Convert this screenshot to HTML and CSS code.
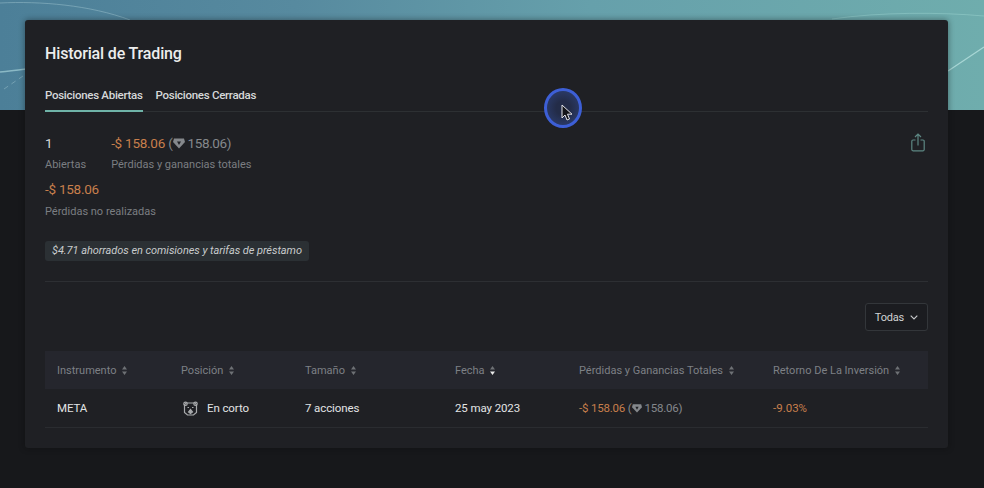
FILE: index.html
```html
<!DOCTYPE html>
<html lang="es">
<head>
<meta charset="utf-8">
<title>Historial de Trading</title>
<link rel="stylesheet" href="styles.css">
</head>
<body>
<svg class="banner-lines" width="984" height="110" viewBox="0 0 984 110" fill="none">
  <path d="M0 3C40 1 90 5 130 20" stroke="#8fb8c4" stroke-opacity=".6"/>
  <path d="M0 72C10 71 18 70 26 69" stroke="#a5d2d8" stroke-opacity=".7" stroke-width="1.5"/>
  <path d="M4 89L23 76" stroke="#a5c8d0" stroke-opacity=".45" stroke-dasharray="5 4"/>
  <path d="M832 19C880 12 940 12 984 16" stroke="#a5dcd8" stroke-opacity=".4"/>
  <path d="M948 71L984 47" stroke="#c0e8e6" stroke-opacity=".7" stroke-width="1.2"/>
</svg>
<main class="card">
  <h1 class="title">Historial de Trading</h1>
  <nav class="tabs">
    <a class="tab tab-active">Posiciones Abiertas</a>
    <a class="tab">Posiciones Cerradas</a>
  </nav>
  <section class="summary">
    <div class="summary-stats">
      <div class="stat-row">
        <div class="stat stat-open">
          <div class="stat-value">1</div>
          <div class="stat-label">Abiertas</div>
        </div>
        <div class="stat">
          <div class="stat-value"><span class="loss">-$ 158.06</span> <span class="muted muted-lg">(<svg class="gem gem-lg" viewBox="0 0 12 12"><path d="M1 1.500h10l1 3.500-6 6.500L0 5z" fill="currentColor"/><path d="M4 4.500h4L6 8z" fill="#1f2024"/></svg>158.06)</span></div>
          <div class="stat-label">Pérdidas y ganancias totales</div>
        </div>
      </div>
      <div class="stat stat-unrealized">
        <div class="stat-value loss">-$ 158.06</div>
        <div class="stat-label">Pérdidas no realizadas</div>
      </div>
    </div>
    <button class="share" aria-label="Compartir">
      <svg width="14" height="19" viewBox="0 0 14 19" fill="none" stroke="#5d8783" stroke-width="1.200">
        <path d="M4.500 7H2a1.200 1.200 0 0 0-1.200 1.200v8.400A1.200 1.200 0 0 0 2 17.800h10a1.200 1.200 0 0 0 1.200-1.200V8.200A1.200 1.200 0 0 0 12 7H9.500"/>
        <path d="M7 12.500V1M4 4l3-3 3 3"/>
      </svg>
    </button>
  </section>
  <div class="saved">$4.71 ahorrados en comisiones y tarifas de préstamo</div>
  <hr class="divider">
  <div class="filter-row">
    <button class="filter">Todas
      <svg width="8" height="5" viewBox="0 0 8 5" fill="none" stroke="#c8cacc" stroke-width="1.100"><path d="M.7.700 4 4 7.300.7"/></svg>
    </button>
  </div>
  <div class="table">
    <div class="row head">
      <div class="cell">Instrumento <svg class="sort" viewBox="0 0 5 9"><path d="M2.500 0 5 3.500H0zM2.500 9 0 5.500h5z"/></svg></div>
      <div class="cell">Posición <svg class="sort" viewBox="0 0 5 9"><path d="M2.500 0 5 3.500H0zM2.500 9 0 5.500h5z"/></svg></div>
      <div class="cell">Tamaño <svg class="sort" viewBox="0 0 5 9"><path d="M2.500 0 5 3.500H0zM2.500 9 0 5.500h5z"/></svg></div>
      <div class="cell">Fecha <svg class="sort" viewBox="0 0 5 9"><path d="M2.500 0 5 3.500H0z"/><path class="sort-on" d="M2.500 9 0 5.500h5z"/></svg></div>
      <div class="cell">Pérdidas y Ganancias Totales <svg class="sort" viewBox="0 0 5 9"><path d="M2.500 0 5 3.500H0zM2.500 9 0 5.500h5z"/></svg></div>
      <div class="cell">Retorno De La Inversión <svg class="sort" viewBox="0 0 5 9"><path d="M2.500 0 5 3.500H0zM2.500 9 0 5.500h5z"/></svg></div>
    </div>
    <div class="row body">
      <div class="cell strong">META</div>
      <div class="cell strong position">
        <svg width="15" height="15" viewBox="0 0 15 15" fill="none" stroke="#a8aaac" stroke-width="1.200">
          <circle cx="2.500" cy="2.800" r="1.700"/><circle cx="12.500" cy="2.800" r="1.700"/>
          <path d="M3 2h9l1.500 2v7.500L10.500 14h-6l-3-2.500V4z"/>
          <path d="M4.500 6.500h1.500M9 6.500h1.500M5.500 11l2-2.500 2 2.500-2 1.500z" fill="#a8aaac"/>
        </svg>
        En corto
      </div>
      <div class="cell strong">7 acciones</div>
      <div class="cell strong">25 may 2023</div>
      <div class="cell values"><span class="loss">-$ 158.06</span> <span class="muted">(<svg class="gem" viewBox="0 0 12 12"><path d="M1 1.500h10l1 3.500-6 6.500L0 5z" fill="currentColor"/><path d="M4 4.500h4L6 8z" fill="#1f2024"/></svg>158.06)</span></div>
      <div class="cell loss">-9.03%</div>
    </div>
  </div>
</main>
<div class="cursor">
  <svg width="12" height="17" viewBox="0 0 12 17"><path d="M1 1v13l3-3 2 5 2.500-1-2-4.800H11z" fill="#15161a" stroke="#e4e4e8" stroke-width="1"/></svg>
</div>
</body>
</html>
```

FILE: styles.css
```css
* { box-sizing: border-box; }

html, body { height: 100%; }

body {
  margin: 0;
  height: 488px;
  overflow: hidden;
  padding: 20px 36px 0 25px;
  position: relative;
  font-family: Roboto, "Liberation Sans", sans-serif;
  font-size: 12px;
  color: #d8dadb;
  background:
    linear-gradient(90deg, #4c7f98 0%, #578a9f 30%, #66a0ab 60%, #6fadad 100%) top left / 100% 110px no-repeat,
    #17181b;
}

.banner-lines {
  position: absolute;
  top: 0;
  left: 0;
}

.card {
  position: relative;
  height: 428px;
  padding: 0 20px;
  background: #1f2024;
  border-radius: 3px;
  box-shadow: 0 0 6px rgba(10, 10, 12, .45);
}

.title {
  margin: 0;
  padding-top: 24px;
  font-size: 16px;
  line-height: 20px;
  font-weight: 500;
  letter-spacing: -.15px;
  color: #eceded;
}

.tabs {
  display: flex;
  gap: 13px;
  margin-top: 22px;
  border-bottom: 1px solid #2d3033;
  height: 26px;
}

.tab {
  height: 26px;
  padding-top: 2px;
  font-size: 11.500px;
  line-height: 14px;
  font-weight: 500;
  letter-spacing: -.28px;
  color: #d6d8d9;
}

.tab-active {
  border-bottom: 2px solid #6fb3a8;
}

.summary {
  display: flex;
  justify-content: space-between;
  align-items: flex-start;
  margin-top: 22px;
}

.stat-row {
  display: flex;
  gap: 25px;
}

.stat { margin-bottom: 8px; }

.stat-value {
  font-size: 13.500px;
  line-height: 18px;
  letter-spacing: -.25px;
  color: #d8dadb;
}

.stat-label {
  margin-top: 6px;
  font-size: 11px;
  line-height: 14px;
  color: #7b7e82;
}

.stat-unrealized .stat-label { margin-top: 7px; }

.loss { color: #c87f4c; }
.muted { color: #85888c; }
.muted-lg { letter-spacing: -.35px; }

.gem {
  width: 10px;
  height: 10px;
  margin: 0 2px 0 1px;
  vertical-align: -1px;
}

.gem-lg {
  width: 12px;
  height: 12px;
}

.values {
  letter-spacing: -.2px;
}

.share {
  margin: -1px 3px 0 0;
  padding: 0;
  border: 0;
  background: none;
  line-height: 0;
}

.saved {
  display: inline-block;
  height: 20px;
  margin-top: 14px;
  padding: 0 7px;
  border-radius: 3px;
  background: #2b3034;
  font-size: 11px;
  line-height: 20px;
  font-style: italic;
  letter-spacing: -.06px;
  color: #c8cbcc;
}

.divider {
  margin: 20px 0 0;
  border: 0;
  border-top: 1px solid #2d2f33;
}

.filter-row {
  display: flex;
  justify-content: flex-end;
  margin-top: 21px;
}

.filter {
  display: flex;
  align-items: center;
  gap: 6px;
  height: 28px;
  padding: 0 9px;
  border: 1px solid #33363a;
  border-radius: 3px;
  background: #1b1c20;
  font: 400 11px Roboto, "Liberation Sans", sans-serif;
  letter-spacing: -.2px;
  color: #d0d2d3;
}

.table { margin-top: 20px; }

.row {
  display: grid;
  grid-template-columns: 124px 124px 150px 124px 194px 1fr;
  align-items: center;
  height: 38px;
  padding-left: 12px;
}

.head {
  background: #25262d;
  font-size: 11px;
  color: #7d8085;
}

.row.body {
  height: 39px;
  border-bottom: 1px solid #2a2c30;
  font-size: 11.500px;
}

.strong {
  font-weight: 400;
  color: #e2e4e5;
  letter-spacing: -.1px;
}

.sort {
  width: 5px;
  height: 9px;
  margin-left: 3px;
  vertical-align: -1px;
  fill: #6e7175;
}

.sort .sort-on { fill: #e8e8e8; }

.position {
  display: flex;
  align-items: center;
  gap: 9px;
  margin-left: 2px;
}

.cursor {
  position: absolute;
  left: 544px;
  top: 88px;
  width: 38px;
  height: 40px;
  padding: 15px 0 0 16px;
  border: 3px solid #3d5fd6;
  border-radius: 50%;
  background: radial-gradient(circle, #232c48 30%, #2e4178 100%);
  line-height: 0;
}

.cursor svg { margin: -2px 0 0 -2px; }
```
